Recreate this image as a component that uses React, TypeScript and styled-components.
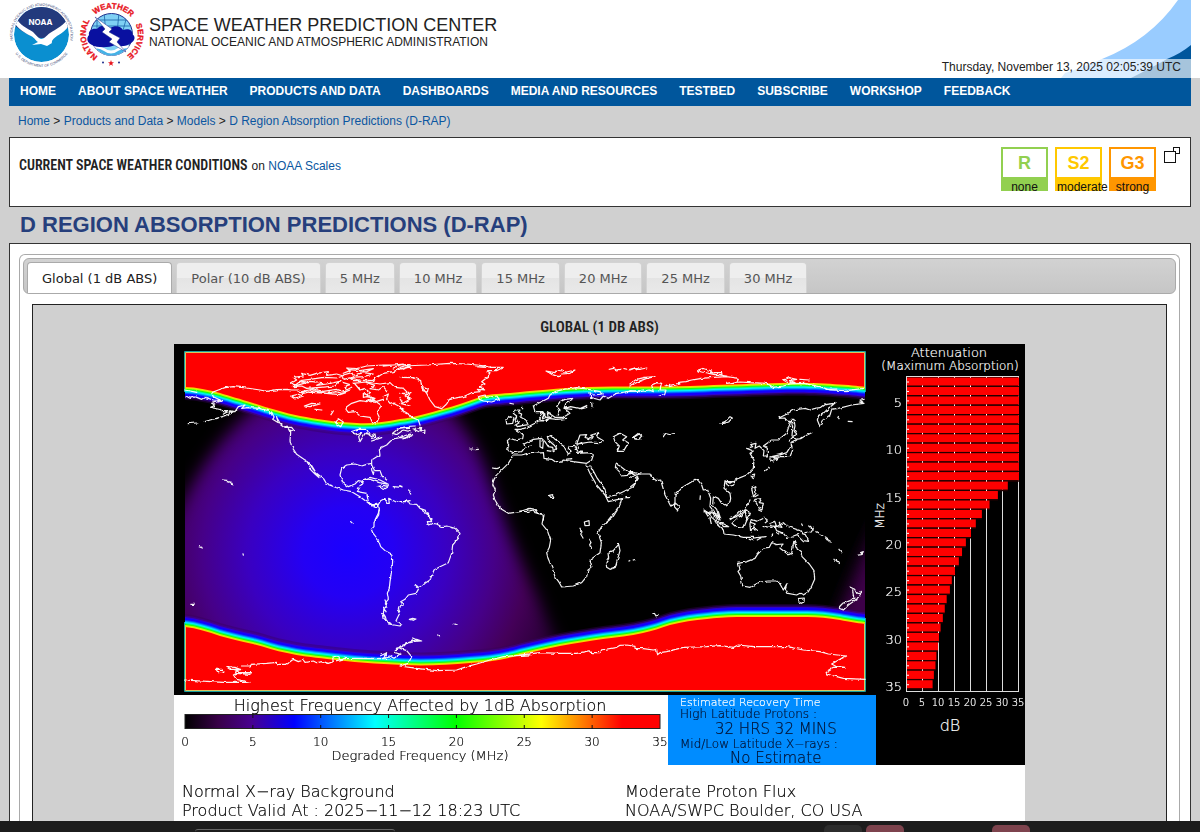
import React from "react";
import styled, { createGlobalStyle } from "styled-components";

const GlobalStyle = createGlobalStyle`
  *, *::before, *::after { box-sizing: border-box; }
  body {
    margin: 0;
    background: #d0d0d0;
    color: #222;
    font-family: "Liberation Sans", Arial, sans-serif;
    font-size: 12px;
  }
  a { color: #0b56a0; text-decoration: none; }
  h1, h2, h3, p { margin: 0; }
`;

const Page = styled.div`
  display: flex;
  flex-direction: column;
  min-height: 100vh;
`;

const Header = styled.header`
  background: #fff;
`;

const HeaderInner = styled.div`
  display: flex;
  justify-content: space-between;
  height: 78px;
  margin: 0 9px;
`;

const Brand = styled.div`
  display: flex;
  align-items: flex-start;
`;

const Logos = styled.svg`
  display: block;
  width: 140px;
  height: 70px;
`;

const BrandText = styled.div`
  padding-top: 14px;
`;

const SiteName = styled.p`
  font-size: 18px;
  line-height: 22px;
  white-space: nowrap;
`;

const Agency = styled.p`
  font-size: 12px;
  line-height: 12px;
  white-space: nowrap;
`;

const HeaderRight = styled.div`
  position: relative;
  flex: 1;
  display: flex;
  align-items: flex-end;
  justify-content: flex-end;
`;

const Swoosh = styled.svg`
  position: absolute;
  right: 0;
  top: 0;
  width: 140px;
  height: 78px;
`;

const Clock = styled.time`
  position: relative;
  padding: 0 10px 2px 20px;
  background: rgba(255, 255, 255, 0.65);
  line-height: 17px;
`;

const Nav = styled.nav`
  display: flex;
  gap: 22px;
  margin: 0 9px;
  padding: 0 11px 2px;
  background: #00569c;
  line-height: 26px;
`;

const NavLink = styled.a`
  color: #fff;
  font-weight: bold;
  white-space: nowrap;
`;

const Breadcrumb = styled.nav`
  padding: 0 18px;
  line-height: 31px;
`;

const Panel = styled.section`
  margin: 0 9px;
  border: 1px solid #333;
  background: #fff;
`;

const Conditions = styled(Panel)`
  display: flex;
  justify-content: space-between;
  height: 70px;
  padding: 9px 9px 0;
`;

const ConditionsLine = styled.div`
  display: flex;
  align-items: baseline;
  gap: 4px;
  padding-top: 8px;
`;

const CondensedTitle = styled.h2`
  font-family: "Roboto Condensed", Roboto, sans-serif;
  font-weight: 600;
  font-size: 14px;
  line-height: 20px;
`;

const Scales = styled.div`
  display: flex;
  align-items: flex-start;
  gap: 7px;
`;

const ScaleBox = styled.div<{ $color: string }>`
  width: 47px;
  height: 44px;
  border: 2px solid ${(p) => p.$color};
  border-bottom: 0;
  background: ${(p) => p.$color};
  color: ${(p) => p.$color};
  text-align: center;
`;

const ScaleLevel = styled.div`
  background: #fff;
  font-size: 18px;
  font-weight: bold;
  line-height: 28px;
`;

const ScaleName = styled.div`
  display: flex;
  justify-content: safe center;
  color: #111;
  line-height: 20px;
  height: 14px;
`;

const PopOut = styled.button`
  width: 18px;
  height: 18px;
  padding: 0;
  border: 0;
  background: none;
  svg { display: block; }
`;

const PageTitle = styled.h1`
  padding: 0 20px;
  color: #263f7c;
  font-size: 22px;
  line-height: 36px;
  white-space: nowrap;
`;

const ProductPanel = styled(Panel)`
  display: flex;
  flex: 1;
  padding: 10px 10px 0 9px;
  border-bottom: 0;
`;

const TabWidget = styled.div`
  display: flex;
  flex: 1;
  flex-direction: column;
  min-width: 0;
  padding: 3px 3px 0;
  border: 1px solid #aaa;
  border-bottom: 0;
  border-radius: 6px 6px 0 0;
`;

const TabBar = styled.div`
  display: flex;
  gap: 4px;
  padding: 3px 3px 0;
  border: 1px solid #aaa;
  border-radius: 6px;
  background: linear-gradient(#d2d2d2, #c6c6c6);
`;

const Tab = styled.button<{ $active?: boolean }>`
  height: 31px;
  margin-bottom: ${(p) => (p.$active ? "-1px" : "0")};
  padding: 0 14px;
  border: 1px solid ${(p) => (p.$active ? "#aaa" : "#d3d3d3")};
  border-bottom: 0;
  border-radius: 4px 4px 0 0;
  background: ${(p) => (p.$active ? "#fff" : "linear-gradient(#eeeeee 50%, #e4e4e4 50%, #e9e9e9)")};
  color: ${(p) => (p.$active ? "#212121" : "#555")};
  font-family: "DejaVu Sans", Verdana, sans-serif;
  font-size: 13px;
  white-space: nowrap;
`;

const Figure = styled.div`
  display: flex;
  flex: 1;
  flex-direction: column;
  align-items: center;
  margin: 10px 9px 0;
  padding-top: 10px;
  border: 1px solid #222;
  border-bottom: 0;
  background: #d0d0d0;
`;

const FigureTitle = styled(CondensedTitle).attrs({ as: "h3" })`
  font-size: 15px;
  line-height: 24px;
  margin-bottom: 5px;
`;

const Chart = styled.svg`
  display: block;
  width: 100%;
  max-width: 851px;
  font-family: "DejaVu Sans", sans-serif;
  font-weight: 200;
`;

const Taskbar = styled.footer`
  display: flex;
  align-items: flex-end;
  height: 11px;
  padding: 0 170px 0 195px;
  background: #1c1c1c;
  overflow: hidden;
`;

const SearchEdge = styled.div`
  width: 200px;
  height: 3px;
  margin-right: auto;
  border-top: 1px solid #666;
  border-radius: 8px 8px 0 0;
`;

const TaskItem = styled.div<{ $color: string; $space?: number }>`
  width: 38px;
  height: 7px;
  margin-left: ${(p) => p.$space ?? 4}px;
  border-radius: 5px 5px 0 0;
  background: ${(p) => p.$color};
`;

const navItems = [
  "HOME", "ABOUT SPACE WEATHER", "PRODUCTS AND DATA", "DASHBOARDS", "MEDIA AND RESOURCES",
  "TESTBED", "SUBSCRIBE", "WORKSHOP", "FEEDBACK",
];

const tabs = [
  "Global (1 dB ABS)", "Polar (10 dB ABS)", "5 MHz", "10 MHz", "15 MHz", "20 MHz", "25 MHz", "30 MHz",
];

const scales = [
  { level: "R", name: "none", color: "#92d050" },
  { level: "S2", name: "moderate", color: "#ffc800" },
  { level: "G3", name: "strong", color: "#ff9600" },
];

// Coastlines, one sheet per part of the globe; each sheet is drawn at a third of its units.
const coastSheets = [
  {
    x: 170,
    y: 340,
    d: `M48 168L60 175 75 170 95 178 105 172 130 180 155 182 M45 150L60 153 80 157
    M155 182L130 170 125 158 145 150 165 143 190 140 230 144 270 150 290 154 320 149 350 148 365 150 385 150 400 160 430 152 470 160 500 155 515 160 540 150
    M155 182L125 190 135 196 122 202 150 208 160 215 190 215 170 226 150 232 120 240 105 245 M55 251L80 249
    M160 222L180 212 195 215 205 200 225 195 215 205 235 203 270 205 295 212 300 222 305 216 312 232 308 238 325 248 320 232 330 250 345 262 365 262 372 272 362 276 355 266 362 280 360 300 365 320 380 343 405 360 415 365 430 388 440 400 462 418 470 432 500 443 520 450 545 455 570 470 590 485 605 498 620 490 628 505 625 520 615 540
    M408 360L415 372 418 385 435 402 447 413 436 395 424 375 415 367
    M610 403L605 390 605 370 590 373 575 378 555 372 530 375 515 385 510 405 518 428 535 440 555 432 565 422 580 425 570 440 562 455 590 460 595 485 610 500
    M610 403L613 390 605 375 605 360 618 352 630 345 628 330 635 322 650 315 662 303 675 295 690 292 705 295 720 284 M720 262L690 264 680 270 668 280 680 284 700 270 720 275
    M545 275L565 268 590 268 600 285 585 280 570 305 566 290 575 278 555 282Z M588 278L605 290 615 282 617 292 605 295 M605 303L635 293
    M583 418L600 412 630 420 655 433 628 428 600 418Z M622 440L640 436 655 440 645 446Z M670 440L695 442 M617 392L630 392 636 408 650 420
    M600 490L620 502 632 482 645 475 650 490 658 490 656 475 680 487 720 482
    M530 200L545 190 570 182 590 185 605 175 625 190 635 197 628 205 620 215 628 232 618 252 608 248 600 232 570 228 555 215 535 217 528 208Z
    M362 130L380 120 370 112 400 108 395 100 420 106 440 100 475 95 470 106 500 102 520 108 500 114 460 112 420 118 390 122 410 128 380 136Z
    M385 128L420 124 455 128 440 136 470 132 510 124 495 138 450 142 410 145 395 138 370 140Z
    M395 155L430 147 460 154 500 148 530 157 510 164 470 160Z M520 100L540 92 530 84 560 86 590 78 640 75 720 74
    M520 105L545 98 550 106 580 98 610 102 580 110 545 112 522 118Z M535 88L570 92 610 86 590 95Z
    M540 114L570 120 612 122 550 122Z M610 120L640 100 670 95 695 85 720 82 M640 78L700 72 670 84
    M548 130L590 126 630 132 660 128 675 142 700 145 715 160 705 165 720 176 M555 132L570 150 585 145 600 158 590 170 615 175 600 182 620 184 640 178
    M520 128L540 134 522 140 530 150 545 142 M590 128L615 136 600 146 625 150 640 140 650 152 M640 170L655 162 650 178 660 190 672 186 665 198
    M670 190L690 200 700 215 712 222 720 232 M690 190L720 198 M580 160L600 168 580 172Z
    M362 168L385 163 400 168 375 177Z M403 198L425 190 450 192 420 200Z M435 208L455 210 M483 224L490 213
    M495 245L505 236 520 246 512 260 500 252Z M160 420L170 421 M172 425L182 427 188 437`,
  },
  {
    x: 400,
    y: 340,
    d: `M0 82L20 76 30 80 8 88 0 84 M10 78L80 75 150 70 200 72 245 77 275 82 310 82 290 92 260 92 270 98 262 112 245 125 255 132 240 140 254 150 232 148 240 155 215 158 190 170 160 175 148 178 140 192 125 206 105 200 90 180 80 160 65 140 62 122 40 113 0 112
    M230 80L255 82 M65 140L85 144 82 156 68 152Z M0 160L30 160 22 175 30 178 8 190 0 176
    M0 205L20 215 30 230 55 240 60 255 M40 268L62 262 60 272 75 270 74 280 60 276Z M0 264L20 260 45 258 M0 292L30 282 35 288 10 296
    M235 170L255 165 262 172 290 168 298 178 275 186 250 183 238 178Z
    M438 93L465 98 470 90 500 96 525 90 510 100 485 102 475 110 455 103Z M628 88L640 85 650 90 662 88 M672 86L690 90 705 84 720 88
    M400 198L415 190 425 185 445 175 450 165 465 155 490 148 530 143 560 147 600 155 610 162 580 165 570 158 572 172 600 180 610 168 625 175 650 160 680 155 720 152
    M400 198L405 215 425 215 435 222 430 235 445 230 442 218 450 222 465 232 490 232 510 220 495 205 512 200 540 206 560 197 M575 190L576 200 M545 206L560 202
    M475 225L480 210 470 200 480 185 495 178 518 175 515 182 498 190 492 205 515 208
    M420 215L425 230 418 238 440 244 450 232 438 228Z M345 210L360 210 355 218 365 222 362 232 378 240 384 254 350 260 345 256 358 248 345 240 350 228 340 220Z
    M318 238L330 230 342 234 338 250 320 252Z M365 200L368 206 M330 190L340 192
    M500 235L470 238 445 235 435 242 415 243 405 250 382 262 362 268 345 268 365 280 370 285 368 296 345 300 330 295 322 302 326 315 320 328 340 338 365 335 375 322 372 312 400 298 425 295 435 305 445 320 458 322 460 332 470 325 462 315 445 300 442 290 455 287 465 298 490 315 495 325 505 342 515 335 505 325 508 318 524 316 526 330 535 322 530 314 545 308
    M530 340L575 338 580 345 575 360 560 370 520 365 490 360 485 366 470 368 455 358 432 355 430 335 390 338 365 345 340 345 325 370 300 395 285 410 278 432 286 450 280 465 285 480 300 505 325 520 360 515 390 505 405 508 412 520 432 524 430 540
    M525 320L535 336 550 336 M530 312L540 285 560 284 555 292 570 297 580 290 572 286 597 278 590 290 610 302 600 308 570 306 545 310Z
    M640 290L660 280 680 290 668 300 684 310 670 334 652 334 658 318 645 305Z M700 292L718 282 M720 297L705 297
    M558 375L570 400 590 435 615 465 625 485 665 476 660 495 645 515 625 540 M560 378L572 378 590 412 615 448 620 470 650 465 700 440 715 415 690 395 682 406 665 408 658 395 646 382 648 372 660 378 678 392 690 402 700 396 720 402
    M210 327L217 327 M226 329L235 328 M278 384L288 386 298 382 M448 466L458 464 462 472 452 472Z M675 473L686 473
    M420 300L430 305 428 325 420 320Z M386 320L394 318 M442 332L455 334 M500 358L515 356 M0 440L6 444 M26 450L32 462
    M0 485L25 485 30 492 50 493 60 505 78 512 95 540`,
  },
  {
    x: 630,
    y: 340,
    d: `M0 88L15 84 20 90 50 84 M0 132L20 118 45 112 75 110 50 115 25 125 0 138 M0 152L30 155 58 150 70 155 65 135 80 128 95 130 90 150 108 150 104 164 88 168
    M105 138L120 133 118 140 150 132 140 128 165 125 185 120 215 115 250 112 290 110 325 115 320 125 290 130 330 126 360 128 410 130 430 142 460 138 480 132 520 130 570 140 600 150 650 152 700 145
    M200 92L220 85 245 93 240 98 275 98 276 104 255 104 215 96Z M248 102L290 108 M460 120L475 113 500 118 480 122 495 128 475 128Z M510 118L537 120
    M588 148L620 147 M640 152L652 150
    M702 178L690 180 698 186 688 186 702 190 665 195 635 203 605 208 600 225 582 238 570 260 562 240 566 226 580 220 595 205 615 190 585 194 575 202 555 205 540 210 525 205 490 210 465 225 445 235 465 234 468 242 482 245 475 264 470 280 445 300 425 300 400 318 412 325 412 348 400 348 402 332 388 318 375 325 378 310 362 314 368 320 350 325 370 333 360 340 372 360 370 385 350 405 325 415 300 430 285 422 282 445 300 460 302 475 300 485 285 495 275 490 265 475 250 468 248 495 260 508 270 540
    M0 395L10 402 60 402 65 412 80 422 92 420 105 465 122 498 135 488 135 465 160 440 185 425 195 418 205 422 215 435 220 450 232 448 242 475 240 500 252 515
    M0 410L22 415 15 430 0 442 M135 488L148 500 142 510 133 500Z M210 478L211 468
    M484 238L492 238 495 258 492 272 500 285 486 288 488 260Z M475 305L490 290 500 300 485 310Z M485 312L488 330 480 350 450 350 440 355 425 350 455 343 470 338 478 325Z M420 352L435 348 430 366 420 362Z M436 352L448 350 440 358Z
    M500 298L512 296 525 288 545 278 M286 425L310 425 312 435 295 440Z M364 405L374 402 370 416 364 414Z
    M365 445L374 440 378 460 370 470Z M375 470L384 465 M375 478L395 476 388 488 400 490 396 510 384 504 380 490 372 484Z M360 480L345 510 320 530 300 536 M345 510L350 540
    M405 393L412 388 M416 382L418 384 M270 250L285 245 300 230 307 234 296 246 282 250Z M100 290L106 281 118 284 133 278 M12 290L25 280 35 288 25 298 14 296Z
    M223 515L240 522 235 530 225 515 M243 515L262 525 270 540 M622 230L627 236 M655 244L666 245`,
  },
  {
    x: 170,
    y: 510,
    d: `M628 0L626 15 612 38 612 50 604 58 608 68 625 90 632 110 645 122 665 132 668 150 666 175 660 215 658 235 652 250 655 268 645 280 652 290 642 295 640 312 642 325 655 342 690 348 695 342 678 332 685 318 690 308 685 295 700 285 692 275 705 268 710 262 715 255 738 250 745 238 735 226 742 232 755 230 765 220 780 210 792 180 810 170 835 158 845 130 848 105 865 85 870 70 855 55 830 48 815 50 800 42 788 40 775 45 772 35 785 35 775 15 755 0
    M645 270L652 285 M640 292L648 305 M638 308L646 320 650 335 664 342 M718 328L728 325 738 327 730 331Z M850 340L862 345 M803 375L808 379 M545 35L550 39 M87 110L97 114 M63 283L72 283 M219 132L220 135
    M45 510L110 514 160 517 240 517 200 508 190 495 200 490 240 493 242 488 200 488 195 483 215 478 180 478 170 471 195 472 210 478 M138 478L155 478 162 486 145 488Z
    M215 468L240 468 245 463 290 460 320 457 325 463 350 463 370 448 385 455 400 450 405 457 430 453 440 458 460 455 475 460 490 455 488 444 505 440 510 450 525 445 500 452 M525 446L600 445 660 446
    M632 437L650 428 640 442 660 438 672 445 690 432 675 428 680 414 700 410 710 400 740 388 755 393 735 394 720 398 M676 422L692 408 712 400 M728 384L745 392 M690 415L710 422 725 440 715 460 690 468 740 475 800 482 860 480 890 470 920 462 960 450 1000 440 1040 437 1080 435`,
  },
  {
    x: 520,
    y: 510,
    d: `M0 3L20 5 40 0 45 8 68 12 70 22 66 42 82 62 92 90 88 112 80 128 84 145 95 170 105 200 118 218 125 231 160 228 185 218 200 200 204 180 216 172 210 150 240 128 244 98 234 68 245 50 262 35 278 22 292 0
    M193 36L207 32 208 46 195 47Z M180 55L186 66 182 72 189 84 M207 88L213 98 209 104 214 116 M296 103L300 122 286 172 270 178 260 172 258 158 266 145 264 128 280 122Z M327 153L329 152 M340 150L343 149
    M552 0L565 8 575 22 590 35 596 48 610 60 612 72 640 75 670 82 700 82 M560 2L580 12 600 42 M580 0L592 22 600 20 595 5 M598 40L612 42 626 50 612 50Z M570 25L574 42
    M632 28L650 14 665 0 M680 0L690 14 680 32 672 52 645 48 636 40Z M700 84L735 80 M688 88L700 92 M712 90L722 84
    M690 40L694 28 712 34 728 26 M694 38L706 42 698 48 712 58 704 60 698 50 692 66 690 44 M735 22L742 34 736 38 M740 50L756 52 M726 48L732 50 M755 78L758 72 M716 0L724 4 M770 68L776 72
    M750 40L764 34 770 50 790 38 800 48 840 62 845 70 856 74 866 94 850 92 832 74 820 78 800 82 790 70 770 62 765 50 752 46 M778 40L786 52 766 48 M855 68L874 66 880 55 M866 48L880 60 M845 42L847 46
    M888 65L900 72 M902 74L912 80 M915 82L922 90 M922 88L934 96
    M655 160L660 178 654 184 662 198 668 228 690 232 720 216 745 213 770 213 780 222 790 240 800 222 796 236 804 250 830 255 840 250 850 255 865 245 875 228 884 208 882 182 868 162 846 140 842 125 832 118 822 94 815 130 806 134 780 115 786 102 770 104 755 98 748 112 730 114 712 134 705 145 680 155Z
    M832 266L853 264 852 276 843 280 834 274Z M988 230L1004 238 1010 250 1024 244 1018 262 1004 266 1000 256 998 240 M1002 264L1010 268 985 285 970 300 955 294 966 282 990 272Z M942 148L952 158 948 150 958 160 M957 118L965 128 M1015 135L1024 134 1030 125 1022 128 M402 308L408 318 414 314
    M0 435L60 428 120 430 170 430 210 422 215 428 240 428 245 420 290 412 300 406 320 405 345 409 345 415 370 416 400 420 410 418 412 434 420 428 440 425 490 412 560 410 600 407 640 412 655 405 700 410 800 410 850 420 900 425 925 432 980 438 965 445 935 462 950 470 975 472 940 472 918 485 920 492 970 505 1035 508`,
  },
];

const northEdge =
  "M184 351H866V387C852 385 812 382 780 383C740 384 712 385 690 386C655 387 620 386 587 387C560 388 530 391 510 393C496 394 488 394 480 397C468 401 455 406 443 409C432 412 412 418 400 419C385 422 370 424 357 423C335 422 316 419 300 416C285 413 268 408 253 403C240 399 230 396 220 393C208 390 196 387 184 387Z";

const southEdge =
  "M184 692H866V624C856 623 850 622 840 620C828 618 818 617 807 617H737C725 617 715 618 707 619C694 620 682 622 670 625C660 628 653 631 643 633C630 636 617 637 603 639C590 641 575 643 560 646C545 649 533 652 520 655C503 660 488 662 470 663C448 665 425 666 403 665C378 664 350 662 327 659C311 657 300 656 287 653C275 651 265 647 253 644C240 641 230 639 220 636C208 632 196 628 184 627Z";

// Colour steps of the absorption edge, from the outside in.
const edgeSteps: [number, string, number][] = [
  [13, "#38005c", 0.4], [11.5, "#4000a0", 0.55], [10, "#3000e0", 0.85], [9, "#1400ff", 1],
  [7, "#0050ff", 1], [6, "#00a8ff", 1], [5, "#00f0ff", 1], [4, "#00ff88", 1], [3, "#20ff00", 1],
  [2, "#b8ff00", 1], [1, "#ffd000", 1], [0, "#ff0000", 1],
];

const attenuation = [
  35, 35, 35, 35, 35, 35, 35, 35, 35, 35, 35, 31.5, 28.4, 25.8, 23.4, 21.5, 20, 18.4, 17.2, 16.2, 15,
  14, 13.4, 12.4, 11.8, 11.2, 10.5, 10, 9.7, 9.2, 8.9, 8.4, 8,
];

const fives = [0, 5, 10, 15, 20, 25, 30, 35];

const AbsorptionChart = () => (
  <Chart viewBox="174 344 851 477" role="img" aria-label="Global D region absorption map">
    <defs>
      <radialGradient id="day" gradientUnits="userSpaceOnUse" cx="348" cy="552" r="225">
        <stop offset="0" stopColor="#1a00ff" />
        <stop offset="0.2" stopColor="#2400f4" />
        <stop offset="0.45" stopColor="#3a00c0" />
        <stop offset="0.65" stopColor="#460088" />
        <stop offset="0.8" stopColor="#440058" />
        <stop offset="1" stopColor="#240030" />
      </radialGradient>
      <linearGradient id="legend">
        <stop offset="0" stopColor="#000" />
        <stop offset="0.07" stopColor="#380048" />
        <stop offset="0.14" stopColor="#480090" />
        <stop offset="0.23" stopColor="#0000ff" />
        <stop offset="0.4" stopColor="#00ffff" />
        <stop offset="0.57" stopColor="#00ff00" />
        <stop offset="0.75" stopColor="#ffff00" />
        <stop offset="0.92" stopColor="#ff0000" />
      </linearGradient>
      <filter id="soft" x="-20%" y="-20%" width="140%" height="140%">
        <feGaussianBlur stdDeviation="8" />
      </filter>
      <filter id="rugged" filterUnits="userSpaceOnUse" x="174" y="344" width="702" height="351">
        <feTurbulence type="fractalNoise" baseFrequency="0.2" numOctaves="2" seed="4" result="n" />
        <feDisplacementMap in="SourceGraphic" in2="n" scale="3" xChannelSelector="R" yChannelSelector="G" />
      </filter>
      <clipPath id="map"><rect x="185" y="352" width="680" height="339" /></clipPath>
      <mask id="sunlit" maskUnits="userSpaceOnUse" x="174" y="344" width="702" height="351">
        <path
          d="M160 700V550C184 494 206 446 262 400H440C466 424 480 448 490 480C504 520 520 560 540 600C550 628 566 660 592 700Z"
          fill="#fff"
          filter="url(#soft)"
        />
      </mask>
    </defs>
    <rect x="174" y="344" width="851" height="477" fill="#fff" />
    <rect x="174" y="344" width="702" height="351" fill="#000" />
    <rect x="876" y="344" width="149" height="421" fill="#000" />

    <g clipPath="url(#map)">
      <rect x="185" y="352" width="680" height="340" fill="#000" />
      <rect x="185" y="352" width="480" height="340" fill="url(#day)" mask="url(#sunlit)" />
      <path d="M890 500C862 550 850 590 828 640H890Z" fill="#3c0048" filter="url(#soft)" />
      {edgeSteps.map(([shift, color, opacity]) => (
        <g key={shift} fill={color} fillOpacity={opacity}>
          <path d={northEdge} transform={`translate(0 ${shift})`} />
          <path d={southEdge} transform={`translate(0 ${-shift})`} />
        </g>
      ))}
    </g>
    <g fill="none" stroke="#18a0a0">
      <path d="M184.500 392V351.500H865.500V392" />
      <path d="M184.500 622V691.500H865.500V618" />
    </g>
    <g fill="none" stroke="#d8c860">
      <path d="M185.500 387V352.500H864.500V387" />
      <path d="M185.500 627V690.500H864.500V624" />
    </g>
    <g
      fill="none"
      stroke="#fff"
      strokeWidth="3.600"
      strokeOpacity="0.950"
      strokeLinejoin="round"
      strokeLinecap="square"
      filter="url(#rugged)"
    >
      {coastSheets.map((s) => (
        <path key={`${s.x}-${s.y}`} d={s.d} transform={`translate(${s.x} ${s.y}) scale(0.33333)`} />
      ))}
    </g>

    <g fill="#fff" stroke="#fff" strokeWidth="0.200" textAnchor="middle">
      <text x="949" y="357" fontSize="13">Attenuation</text>
      <text x="950" y="370" fontSize="12">(Maximum Absorption)</text>
      <text x="950" y="731" fontSize="16">dB</text>
      <text transform="translate(884 516) rotate(-90)" fontSize="12">MHz</text>
      {fives.map((v) => (
        <text key={v} x={906 + v * 3.2} y="706" fontSize="10">{v}</text>
      ))}
    </g>
    <g fill="#fff" stroke="#fff" strokeWidth="0.200" textAnchor="end" fontSize="13">
      {fives.slice(1).map((v) => (
        <text key={v} x="902" y={407 + (v - 5) * 9.46}>{v}</text>
      ))}
    </g>
    <g stroke="#ddd">
      {fives.map((v) => (
        <path key={v} d={`M${906.5 + v * 3.2} 376V691`} />
      ))}
      <path d="M906 376.500H1019M906 691.500H1019" />
    </g>
    {attenuation.map((db, i) => (
      <g key={i}>
        <rect x="907" y={377.5 + i * 9.46} width={db * 3.2} height="8.200" fill="#f00" />
        <path d={`M907 ${386.4 + i * 9.46}h${db * 3.2}`} stroke="#200" strokeWidth="1.400" />
        <path d={`M907 ${382 + i * 9.46}h2`} stroke="#fff" />
      </g>
    ))}
    <path
      d="M922.500 377V690M938.500 377V640M954.500 377V570M970.500 377V535M986.500 377V510M1002.500 377V488"
      stroke="#fff"
      strokeDasharray="1.400 8.060"
      strokeDashoffset="-8.600"
    />

    <rect x="185" y="714.500" width="475" height="14" fill="url(#legend)" stroke="#222" />
    <path
      d={fives.slice(1, 7).map((v) => `M${185 + v * 13.571} 714v4m0 7v4`).join("")}
      stroke="#111"
    />
    <g fill="#000" stroke="#000" strokeWidth="0.200" textAnchor="middle">
      <text x="420" y="711" fontSize="16">Highest Frequency Affected by 1dB Absorption</text>
      {fives.map((v) => (
        <text key={v} x={185 + v * 13.571} y="746" fontSize="12">{v}</text>
      ))}
      <text x="420" y="760" fontSize="13">Degraded Frequency (MHz)</text>
    </g>
    <g fill="#000" stroke="#000" strokeWidth="0.200" fontSize="16">
      <text x="182" y="797">Normal X−ray Background</text>
      <text x="182" y="816">Product Valid At : 2025−11−12 18:23 UTC</text>
      <text x="625" y="797">Moderate Proton Flux</text>
      <text x="625" y="816">NOAA/SWPC Boulder, CO USA</text>
    </g>

    <rect x="668" y="695" width="208" height="70" fill="#008cff" />
    <text x="680" y="706" fill="#fff" stroke="#fff" strokeWidth="0.200" fontSize="11">Estimated Recovery Time</text>
    <g fill="#001030" stroke="#001030" strokeWidth="0.200" fontSize="12">
      <text x="680" y="718">High Latitude Protons :</text>
      <text x="715" y="734" fontSize="15">32 HRS 32 MINS</text>
      <text x="680" y="748">Mid/Low Latitude X−rays :</text>
      <text x="730" y="763" fontSize="15">No Estimate</text>
    </g>
  </Chart>
);

const AgencyLogos = () => (
  <Logos viewBox="9 0 140 70" role="img" aria-label="NOAA and National Weather Service">
    <defs>
      <clipPath id="noaaDisc"><circle cx="41.500" cy="34.500" r="27.500" /></clipPath>
      <clipPath id="nwsDisc"><circle cx="111.500" cy="34.500" r="21" /></clipPath>
      <path id="noaaTop" d="M18.500 52.500A29 29 0 1 1 64.500 52.500" />
      <path id="noaaLow" d="M13.500 50.500A32 32 0 0 0 69.500 50.500" />
      <path id="nwsRing" d="M111.500 60.500A26 26 0 1 1 112 60.500" />
    </defs>
    <g clipPath="url(#noaaDisc)">
      <circle cx="41.500" cy="34.500" r="27.500" fill="#0a8fd0" />
      <path d="M10 5H73V24C62 32 52 38 42 38C32 38 22 32 10 22Z" fill="#233a7d" />
      <path
        d="M13 20C17 29 25 33 31 36C35 38 36 41 38 42L32 45L41 44L47 46L52 43C51 41 54 38 57 36C64 32 69 28 71 20L69 17C65 25 56 29 50 33C46 36 44 39 41 39C38 38 36 35 33 32C27 28 20 26 15 16Z"
        fill="#fff"
      />
    </g>
    <text x="40.500" y="25" textAnchor="middle" fill="#fff" fontFamily="Inter, sans-serif" fontWeight="700" fontSize="8">NOAA</text>
    <g fill="#3c4a78" fontFamily="Liberation Sans, sans-serif" fontSize="3.600">
      <text><textPath href="#noaaTop" startOffset="50%" textAnchor="middle">NATIONAL OCEANIC AND ATMOSPHERIC ADMINISTRATION</textPath></text>
      <text><textPath href="#noaaLow" startOffset="50%" textAnchor="middle">U.S. DEPARTMENT OF COMMERCE</textPath></text>
    </g>
    <circle cx="111.500" cy="34.500" r="21" fill="#7fd0f4" stroke="#1d2f8c" />
    <g clipPath="url(#nwsDisc)">
      <path d="M97 14V36M104 12L106 34M119 12L117 34M127 16L122 34M92 26H132M95 20H128" stroke="#1b62a8" fill="none" strokeWidth="0.800" />
      <path d="M90 48Q97 43 104 48T118 48T134 47V60H90Z" fill="#fff" />
      <path d="M90 51Q97 46 104 51T118 51T134 50V60H90Z" fill="#45b2e6" />
    </g>
    <path
      d="M92 45C87 43 86 38 89 35C88 31 92 28 97 29C100 25 106 25 110 28C115 25 121 26 123 30C128 28 133 30 132 34C136 36 135 41 131 43C126 47 119 47 115 45C109 48 97 48 92 45Z"
      fill="#0910a0"
    />
    <path d="M95 17L112 29L109 32L120 38L117 42L126 52L109 42L112 39L102 32L105 29Z" fill="#fff" stroke="#1d2f8c" strokeWidth="0.500" />
    <g fill="#e8141c" stroke="#e8141c" strokeWidth="0.300" fontFamily="Liberation Sans, sans-serif" fontWeight="700" fontSize="8" textAnchor="middle">
      <text><textPath href="#nwsRing" startOffset="21.500%">NATIONAL</textPath></text>
      <text><textPath href="#nwsRing" startOffset="51%">WEATHER</textPath></text>
      <text><textPath href="#nwsRing" startOffset="79.500%">SERVICE</textPath></text>
    </g>
    <path d="M111 60L111.800 62.300H114L112.200 63.700L112.900 66L111 64.600L109.100 66L109.800 63.700L108 62.300H110.200Z" fill="#e8141c" />
    <circle cx="103" cy="62.500" r="1" fill="#1d2f8c" />
    <circle cx="119" cy="62.500" r="1" fill="#1d2f8c" />
  </Logos>
);

export default function App() {
  return (
    <>
      <GlobalStyle />
      <Page>
        <Header>
          <HeaderInner>
            <Brand>
              <AgencyLogos />
              <BrandText>
                <SiteName>SPACE WEATHER PREDICTION CENTER</SiteName>
                <Agency>NATIONAL OCEANIC AND ATMOSPHERIC ADMINISTRATION</Agency>
              </BrandText>
            </Brand>
            <HeaderRight>
              <Swoosh viewBox="0 0 140 78" aria-hidden="true">
                <path d="M127 0Q99 40 51 59Q36 66 14 73L10 78H140V0Z" fill="#99ccff" />
                <path d="M140 45Q129 54 116 59Q100 68 80 78H140Z" fill="#00569c" />
              </Swoosh>
              <Clock dateTime="2025-11-13T02:05:39Z">Thursday, November 13, 2025 02:05:39 UTC</Clock>
            </HeaderRight>
          </HeaderInner>
        </Header>
        <Nav aria-label="Main">
          {navItems.map((item) => (
            <NavLink key={item} href="#">{item}</NavLink>
          ))}
        </Nav>
        <Breadcrumb aria-label="Breadcrumb">
          <a href="#">Home</a> &gt; <a href="#">Products and Data</a> &gt; <a href="#">Models</a> &gt;{" "}
          <a href="#">D Region Absorption Predictions (D-RAP)</a>
        </Breadcrumb>
        <Conditions>
          <ConditionsLine>
            <CondensedTitle>CURRENT SPACE WEATHER CONDITIONS</CondensedTitle>
            <span>on <a href="#">NOAA Scales</a></span>
          </ConditionsLine>
          <Scales>
            {scales.map((s) => (
              <ScaleBox key={s.level} $color={s.color}>
                <ScaleLevel>{s.level}</ScaleLevel>
                <ScaleName>{s.name}</ScaleName>
              </ScaleBox>
            ))}
            <PopOut aria-label="Open in new window">
              <svg width="18" height="18" fill="#fff" stroke="#111">
                <rect x="10.500" y="0.500" width="6" height="6" />
                <rect x="1.500" y="4.500" width="11" height="11" />
              </svg>
            </PopOut>
          </Scales>
        </Conditions>
        <PageTitle>D REGION ABSORPTION PREDICTIONS (D-RAP)</PageTitle>
        <ProductPanel>
          <TabWidget>
            <TabBar role="tablist">
              {tabs.map((t, i) => (
                <Tab key={t} role="tab" aria-selected={i === 0} $active={i === 0}>{t}</Tab>
              ))}
            </TabBar>
            <Figure role="tabpanel">
              <FigureTitle>GLOBAL (1 DB ABS)</FigureTitle>
              <AbsorptionChart />
            </Figure>
          </TabWidget>
        </ProductPanel>
        <Taskbar>
          <SearchEdge />
          <TaskItem $color="#2c2c2c" />
          <TaskItem $color="#7d434d" />
          <TaskItem $color="#7d434d" $space={88} />
        </Taskbar>
      </Page>
    </>
  );
}
